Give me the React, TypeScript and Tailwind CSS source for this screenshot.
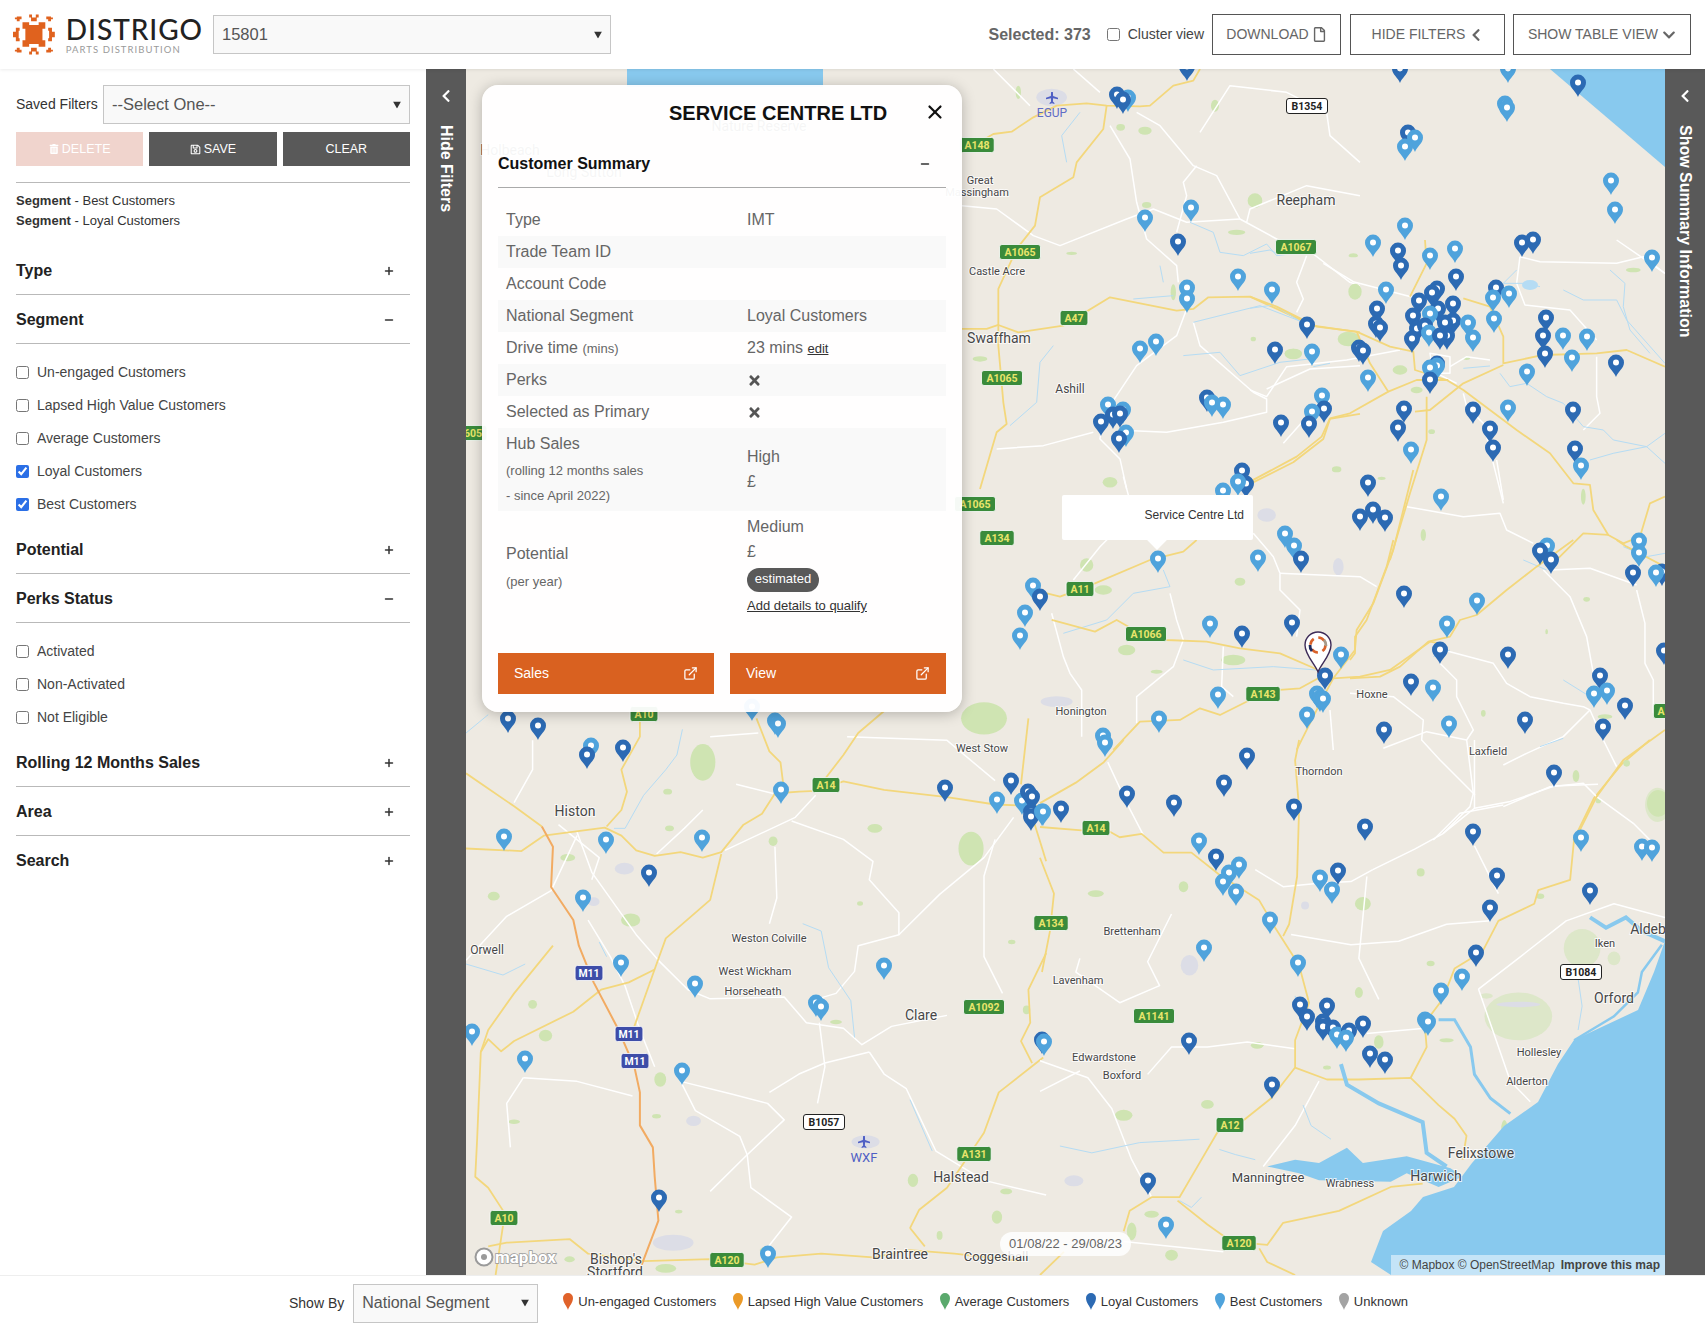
import type { ReactNode } from "react";
import { ExternalLink, Minus, Plus, X } from "lucide-react";
import { FaChevronDown, FaChevronLeft, FaRegFile, FaRegSave, FaTimes, FaTrashAlt } from "react-icons/fa";

const LIGHT = "#4fa3dc";
const DARK = "#2c6ab3";

type Region = {
  transform: string;
  green: number[][];
  forest?: number[][];
  grey?: number[][];
  white: string[];
  water: string[];
  yellow: string[];
  orange?: string[];
};

// each region of the map is traced in its own local coordinates
const regions: Region[] = [
  {
    transform: "translate(466 700) scale(.37 .3667)",
    green: [[1365, 405, 34, 46], [640, 170, 34, 50], [1400, 50, 62, 44], [445, 600, 26, 18], [525, 1035, 16, 20], [215, 915, 18, 16], [1105, 350, 20, 12], [830, 385, 12, 13], [1435, 1410, 14, 18], [1208, 1310, 14, 18], [75, 535, 16, 12], [1000, 878, 16, 6], [550, 350, 12, 8], [545, 250, 12, 8], [130, 1150, 16, 6], [515, 1135, 12, 6], [1515, 845, 10, 12], [1475, 660, 10, 6], [1065, 555, 8, 6], [275, 430, 20, 10], [180, 830, 12, 12], [810, 1500, 16, 8], [1280, 1460, 8, 12], [1460, 1340, 16, 8], [575, 1395, 10, 5], [280, 1525, 14, 8], [540, 1550, 28, 12]],
    grey: [[560, 1480, 55, 22], [1080, 1205, 38, 18], [615, 1148, 20, 14], [428, 460, 26, 16], [345, 550, 16, 12]],
    white: [
      "M300 360L340 470L460 640L520 710L600 790L660 815L860 810L920 880L1020 895L1070 940L1150 890L1300 860",
      "M0 710L110 590L230 520L300 370",
      "M700 410L890 320L945 260",
      "M730 230L830 255",
      "M880 330L1020 380L1100 440L1090 490L1170 580L1170 640L1060 670L1050 740L1000 800L950 815",
      "M1170 640L1280 530L1400 430L1480 320",
      "M835 400L840 540L820 610",
      "M955 880L970 1000L950 1100",
      "M1090 960L1130 1020L1190 1060L1270 1230L1400 1310L1568 1350",
      "M580 1040L720 1075L815 1100L860 1145L760 1240L660 1340",
      "M580 1040L620 1120L740 1190L760 1240L770 1330L880 1410L810 1500",
      "M155 1030L110 1100L120 1220",
      "M155 1030L300 1040L450 1080",
      "M820 1070L900 1020L970 990L1090 960",
      "M1430 380L1400 480L1400 700L1450 800",
      "M1030 100L1300 110L1430 220",
      "M330 600L390 700L430 780L470 900L510 1000",
      "M250 340L360 430L340 490",
      "M180 110L180 190L130 280",
      "M660 100L790 90",
      "M515 420L590 350L640 300",
    ],
    water: ["M585 80L570 150L540 190L480 260L430 350L400 350", "M0 90L60 40", "M910 610L960 630L980 730L1040 820L1050 920", "M1200 1090L1260 1230", "M0 720L100 750L160 720", "M360 660L380 700"],
    yellow: [
      "M0 200L130 290L205 345",
      "M0 405L150 412L210 370L375 348L420 370L460 410L510 425L580 415L640 430L690 415L750 340L800 310L835 255",
      "M835 255L900 250L945 248L1020 222L1130 245L1300 265L1430 285L1568 290",
      "M470 40L470 100L420 190L435 250L420 300L380 345",
      "M785 50L820 140L850 170L860 250",
      "M945 248L1020 150L1060 90L1130 30",
      "M515 720L540 650L660 545L690 420",
      "M515 720L455 890",
      "M510 735L440 770L365 790L290 850L130 930L95 958L60 925L40 960L30 1200L25 1300L60 1330L105 1400L80 1568",
      "M235 670L130 800L60 900L40 960",
      "M60 1490L110 1480L280 1470L330 1510L480 1530L660 1525L780 1540L840 1520L960 1510L1100 1520L1200 1500L1320 1510L1500 1530",
      "M1200 1440L1225 1390L1300 1330L1400 1180L1440 1070L1560 975",
      "M1200 1440L1240 1490",
      "M1500 230L1520 50",
      "M1525 300L1568 440",
      "M1568 690L1520 790L1525 880L1500 930L1530 990",
    ],
    orange: ["M205 345L235 400L230 510L290 600L305 670L345 770L410 895L455 1000L470 1070L470 1160L505 1220L510 1300L520 1420L475 1540"],
  },
  {
    transform: "translate(1040 740) scale(.3986 .3412)",
    green: [[810, 480, 20, 20], [955, 388, 10, 12], [140, 450, 20, 10], [360, 430, 12, 16], [210, 1100, 22, 16], [420, 1068, 16, 13], [545, 895, 16, 10], [800, 740, 10, 16], [1255, 458, 10, 8], [980, 655, 10, 8], [1020, 880, 18, 6], [850, 885, 12, 20], [720, 960, 10, 6], [280, 1390, 18, 10], [230, 1440, 12, 26], [330, 1510, 16, 16], [1165, 1140, 8, 26]],
    forest: [[1200, 810, 85, 70], [1360, 610, 46, 56], [1550, 190, 32, 50], [1440, 640, 16, 20], [1120, 750, 16, 8]],
    grey: [[375, 660, 22, 30], [85, 1292, 24, 16], [665, 485, 10, 12], [1200, 775, 55, 8]],
    white: [
      "M835 380L940 320L1010 275L1090 200L1180 180L1290 135L1400 130",
      "M540 380L610 430L700 420L780 415L835 380",
      "M1100 730L1200 640L1320 530L1440 480L1568 520",
      "M820 860L965 845",
      "M380 900L420 900L520 885L640 905",
      "M0 940L120 990L180 1080L230 1230L280 1340",
      "M210 1470L460 1500",
      "M170 65L220 190L260 280",
      "M330 510L270 650L300 720L200 770L90 680L100 640",
      "M1090 0L1090 200",
      "M1090 310L1150 450",
      "M820 400L800 640L850 760",
      "M270 980L330 900L380 900",
      "M700 1000L640 1130L560 1250",
      "M630 570L780 600L900 590L1020 540L1130 530",
      "M1100 730L1180 1000L1230 1060",
      "M0 1030L100 970",
    ],
    water: ["M540 1230L490 1215L450 1200", "M50 1190L130 1210L250 1180L400 1170", "M660 1070L680 1130L730 1170", "M350 1350L380 1370L405 1340", "M640 750L650 800", "M1350 700L1360 780L1350 850", "M1385 1290L1490 1380", "M1040 1340L1230 1320L1385 1290"],
    yellow: [
      "M0 255L105 265L170 265L200 285L255 275L310 330L380 330L450 395L550 470L590 550L650 660L675 770L640 880L640 960L720 995L800 995L930 990L1000 1070L1040 1110L1070 1160L1060 1230",
      "M650 0L640 60L650 200L645 400L625 540L610 575",
      "M640 960L580 1050L510 1115L450 1140L400 1240L350 1340L280 1340L225 1380L210 1440",
      "M345 1350L420 1420L480 1470L570 1480L610 1415L750 1380L880 1310L960 1300",
      "M550 1490L570 1530L640 1568",
      "M0 345L35 450L25 560L5 680",
      "M930 990L970 900L965 830L1010 760L1040 670L1110 620L1150 530L1240 480L1250 440L1330 410L1340 290L1390 170L1460 70L1530 0",
      "M0 185L90 125L160 65L210 0",
      "M0 1568L60 1500",
    ],
  },
  {
    transform: "translate(960 69) scale(.3333)",
    green: [[482, 175, 13, 10], [555, 185, 20, 12], [830, 490, 26, 8], [1165, 810, 32, 22], [1000, 855, 26, 16], [885, 395, 22, 22], [335, 553, 16, 5], [60, 870, 22, 8], [765, 110, 12, 18], [560, 408, 14, 9], [640, 670, 8, 24], [175, 70, 8, 20], [880, 810, 8, 7], [1130, 1200, 14, 8], [450, 1240, 22, 16], [1180, 560, 14, 5]],
    grey: [[275, 85, 46, 26]],
    white: [
      "M530 130L600 170L700 290L770 320L840 450L950 510L1060 555L1170 640L1200 650",
      "M680 720L650 800L530 890L430 1040L420 1110L480 1170L500 1260",
      "M720 190L810 50L980 70L1100 130L1110 200L1200 280",
      "M450 170L510 270L530 400L560 510L650 590L655 640",
      "M6 410L110 420L220 500L300 530L500 450L580 420L680 460L840 450",
      "M700 760L720 830L880 970L920 990L920 1030L790 1060L620 1090L520 1085",
      "M920 960L1050 900L1200 890",
      "M650 490L680 380L670 340L710 290",
      "M110 1140L250 1130L400 1090",
      "M1040 560L1010 640L1030 690L1010 730",
      "M860 460L870 420L1040 350L1200 380",
      "M340 0L420 70",
      "M100 0L210 110",
    ],
    water: ["M690 460L760 490L780 550L850 560L920 525L950 560L1070 545", "M360 130L305 200L320 280", "M280 830L240 880L230 1000L150 1070", "M520 690L640 680", "M700 760L900 710L1030 760", "M670 860L780 850L840 920L960 880L1050 870", "M600 590L610 640"],
    yellow: [
      "M6 250L100 195L155 188L220 145L290 110L380 103L440 110L540 112L570 110L640 50L700 35L720 0",
      "M440 110L430 180L350 280L340 325L240 385L225 470L170 540L115 660L115 830L130 1000L140 1065L110 1090L60 1260",
      "M6 780L80 780L115 768L175 790L310 770L450 685L650 725L700 720L745 685L870 683L1060 770L1200 790",
      "M1200 1035L1110 1050L1090 1110L1000 1180L860 1250",
    ],
  },
  {
    transform: "translate(1250 240) scale(.3333)",
    green: [[310, 300, 22, 20], [130, 340, 26, 14], [315, 155, 20, 24], [450, 390, 22, 14], [500, 450, 18, 10], [650, 355, 10, 5], [260, 690, 14, 7], [545, 575, 10, 7], [395, 715, 12, 5], [1150, 90, 22, 7], [310, 45, 12, 5], [1000, 770, 7, 24], [520, 885, 8, 18]],
    white: [
      "M220 70L310 125L500 175",
      "M810 50L870 65L1100 70L1180 50L1245 100",
      "M1245 100L1100 0",
      "M810 50L800 130L825 195L960 210L1040 300",
      "M1040 350L1040 470L1050 520L1000 570",
      "M640 460L650 500L700 550L760 790",
      "M470 800L640 830L750 820L770 870L850 910",
      "M540 340L600 350L600 400L550 400Z",
      "M600 380L650 350L720 360",
      "M0 450L50 470L110 380L290 360L450 330",
      "M100 610L180 520L240 480",
      "M560 400L620 430",
      "M740 660L760 780",
    ],
    water: ["M940 150L1000 180L1100 180L1130 240L1245 370", "M750 400L780 440L830 430L890 470L940 490L1000 560L1060 570L1090 600L1190 620L1245 580", "M800 90L760 130L830 130L870 140", "M1080 90L1125 130L1120 200L1140 270L1200 340", "M1020 660L1090 640L1190 620L1245 670", "M640 385L720 378", "M0 40L60 30L90 45", "M0 205L70 195L160 250", "M190 380L240 370"],
    yellow: [
      "M0 170L80 200L200 260L320 275L420 320L490 335L495 390L590 420L640 450L720 510L800 570L900 640L970 730L1020 735L1030 810L1075 885L1120 910L1170 890L1200 790L1245 770",
      "M320 275L360 370L415 455L300 520L240 535L215 590L140 650L0 725",
      "M415 455L500 420L595 420",
      "M525 0L530 70L480 170",
      "M640 175L720 200L760 290L760 370L880 345L1040 340L1130 330L1245 380",
      "M495 515L540 510L640 430L760 375",
      "M530 470L530 600L480 760L420 960",
      "M920 960L1000 880L1075 885",
    ],
  },
  {
    transform: "translate(1350 540) scale(.3333)",
    green: [[710, 178, 10, 7], [590, 275, 4, 8], [400, 520, 7, 10], [678, 708, 10, 18], [745, 782, 8, 8], [925, 790, 34, 40], [765, 530, 22, 7], [830, 670, 10, 10]],
    white: [
      "M580 90L660 170L710 290L730 400",
      "M270 370L320 420L320 470L370 570L350 600L370 760L360 800L280 880",
      "M280 330L430 370L470 430L540 470L640 490L700 500L720 510L760 600L800 680",
      "M100 625L230 575L350 600",
      "M460 800L600 740L700 730L740 770L850 850L900 900",
      "M250 900L330 820L460 795",
      "M860 150L885 250L885 370L910 420L910 520",
      "M0 460L130 470L220 540L215 600L270 660L375 765",
      "M720 510L640 590L530 640L460 675",
      "M600 90L720 85L860 135",
    ],
    water: ["M520 60L590 90", "M570 620L640 595", "M640 420L720 470", "M820 20L890 50L945 40", "M300 330L250 350"],
    yellow: [
      "M130 0L110 80L50 240L15 290L15 340L0 360",
      "M0 415L90 410L150 380L235 305L300 290L330 240L380 225L470 150L560 80L670 0",
      "M945 570L820 660L740 770L690 870L670 900",
      "M800 0L830 20L945 80",
    ],
  },
  {
    transform: "translate(1040 470) scale(.3333)",
    green: [[260, 540, 26, 16], [140, 285, 20, 20], [190, 360, 26, 14], [600, 335, 16, 12], [580, 570, 36, 16], [350, 605, 18, 6]],
    grey: [[680, 135, 28, 20], [895, 290, 16, 26], [50, 695, 48, 16]],
    white: [
      "M250 20L280 130L180 230L100 330",
      "M35 430L70 560L90 610L125 660L125 800",
      "M720 310L720 360L780 420L770 500",
      "M720 310L960 320L1010 350",
      "M640 190L700 260L720 310",
      "M550 530L545 650L580 680",
      "M390 370L410 450L430 510L400 590L290 680L290 760",
      "M870 720L880 840",
    ],
    water: ["M70 490L200 450L280 370L390 350", "M430 570L520 600L700 590L830 600", "M370 300L390 350"],
    yellow: [
      "M0 365L60 380L165 340L330 270L430 245L470 210",
      "M35 450L165 485L230 450L300 490L380 510L500 515L600 535L720 550L835 600",
      "M220 840L300 755L420 750L480 715L540 735L630 690L720 660L780 655L835 625L880 625L960 620L1050 600L1170 515L1200 520",
      "M770 840L840 700L880 625L945 540L950 480L1000 400L1060 240L1120 0",
    ],
  },
];

// tip of every customer pin, in page coordinates: [x, y, 0 light / 1 dark]
const pins: number[][] = [
  [1187, 81, 1], [1128, 112, 0], [1117, 109, 1], [1123, 114, 1], [1400, 83, 1], [1508, 83, 0], [1578, 97, 1], [1505, 118, 0], [1507, 122, 0],
  [1408, 147, 1], [1415, 152, 0], [1405, 161, 0], [1611, 195, 0], [1615, 224, 0], [1405, 240, 0], [1191, 222, 0], [1145, 232, 0], [1178, 256, 1],
  [1238, 291, 0], [1272, 304, 0], [1187, 302, 0], [1187, 313, 0], [1307, 339, 1], [1156, 356, 0], [1140, 363, 0], [1275, 364, 1], [1312, 366, 0], [1359, 362, 1],
  [1373, 257, 0], [1398, 265, 1], [1401, 280, 1], [1430, 270, 0], [1455, 263, 0], [1456, 291, 1], [1522, 257, 1], [1533, 254, 1], [1652, 272, 0], [1386, 304, 0],
  [1377, 323, 1], [1376, 338, 1], [1380, 342, 1], [1363, 365, 1],
  [1437, 303, 1], [1432, 307, 1], [1419, 315, 1], [1413, 330, 1], [1438, 323, 1], [1453, 318, 1], [1417, 343, 1], [1412, 353, 1], [1453, 335, 1],
  [1430, 328, 0], [1425, 340, 1], [1429, 347, 0], [1447, 350, 1], [1440, 350, 1], [1445, 337, 1], [1468, 337, 0], [1473, 352, 0],
  [1496, 302, 1], [1493, 312, 0], [1509, 308, 0], [1494, 333, 0], [1546, 332, 1], [1563, 350, 0], [1587, 351, 0], [1543, 350, 1], [1545, 368, 1], [1572, 372, 0], [1616, 377, 1], [1527, 386, 0],
  [1437, 378, 1], [1437, 380, 0], [1430, 382, 0], [1430, 394, 1],
  [1368, 392, 0], [1404, 423, 1], [1398, 442, 1], [1411, 464, 0], [1473, 424, 1], [1508, 422, 0], [1573, 424, 1], [1490, 443, 1], [1493, 462, 1], [1575, 463, 1], [1581, 480, 0],
  [1368, 497, 1], [1441, 511, 0], [1360, 531, 1], [1373, 524, 1], [1385, 532, 1], [1285, 548, 0], [1294, 560, 0], [1301, 573, 1],
  [1108, 419, 0], [1123, 424, 0], [1113, 429, 1], [1120, 428, 1], [1101, 436, 1], [1126, 447, 0], [1119, 453, 1], [1207, 412, 1], [1212, 417, 0], [1223, 419, 0], [1281, 437, 1],
  [1322, 410, 0], [1324, 423, 1], [1312, 426, 0], [1309, 438, 1],
  [1242, 485, 1], [1246, 498, 1], [1238, 496, 0], [1223, 505, 0],
  [1158, 573, 0], [1258, 572, 0], [1547, 560, 0], [1540, 565, 1], [1551, 574, 1], [1639, 555, 0], [1639, 567, 0], [1633, 587, 1], [1662, 586, 1], [1656, 587, 0],
  [1404, 608, 1], [1477, 615, 0], [1447, 638, 0], [1440, 664, 1], [1508, 669, 1], [1411, 696, 1], [1433, 702, 0], [1600, 690, 1], [1607, 705, 0], [1594, 708, 0], [1625, 720, 1],
  [1449, 738, 0], [1525, 734, 1], [1384, 744, 1], [1603, 741, 1], [1554, 787, 1], [1664, 665, 1],
  [1033, 600, 0], [1040, 611, 1], [1025, 627, 0], [1020, 650, 0],
  [1210, 638, 0], [1242, 648, 1], [1292, 637, 1], [1341, 669, 0], [1218, 709, 0], [1325, 690, 1], [1317, 708, 0], [1320, 712, 0], [1323, 713, 0], [1307, 729, 0], [1159, 733, 0], [1103, 750, 0], [1105, 757, 0],
  [508, 733, 1], [538, 740, 1], [591, 760, 0], [587, 769, 1], [623, 762, 1], [752, 721, 0], [775, 735, 0], [778, 738, 0], [781, 804, 0], [945, 802, 1], [997, 814, 0], [1011, 795, 1],
  [1022, 815, 0], [1028, 806, 1], [1032, 811, 1], [1031, 826, 1], [1031, 831, 1], [1042, 826, 0], [504, 851, 0], [606, 854, 0], [702, 852, 0], [649, 887, 1], [583, 912, 0], [621, 977, 0],
  [695, 998, 0], [884, 980, 0], [816, 1017, 0], [821, 1021, 0], [472, 1046, 0], [525, 1073, 0], [682, 1085, 0], [659, 1212, 1], [768, 1268, 0],
  [1247, 770, 1], [1127, 808, 1], [1174, 817, 1], [1224, 797, 1], [1294, 821, 1], [1043, 826, 0], [1061, 823, 1], [1365, 841, 1], [1473, 846, 1], [1581, 852, 0], [1642, 861, 0], [1652, 862, 0],
  [1199, 855, 0], [1216, 871, 1], [1239, 879, 0], [1229, 887, 0], [1223, 896, 0], [1236, 906, 0], [1338, 885, 1], [1320, 892, 0], [1332, 904, 0], [1497, 890, 1], [1590, 905, 1], [1490, 922, 1],
  [1270, 934, 0], [1204, 962, 0], [1476, 967, 1], [1298, 977, 0], [1462, 991, 0], [1441, 1005, 0], [1425, 1034, 0], [1428, 1036, 0],
  [1300, 1019, 1], [1307, 1031, 1], [1327, 1020, 1], [1323, 1036, 1], [1323, 1041, 1], [1333, 1042, 1], [1337, 1049, 0], [1349, 1045, 1], [1346, 1052, 0], [1363, 1038, 1], [1370, 1068, 1], [1385, 1074, 1],
  [1189, 1055, 1], [1042, 1054, 1], [1044, 1056, 0], [1272, 1099, 1], [1148, 1195, 1], [1166, 1239, 0],
];

const placeLabels: [string, number, number, number][] = [
  ["Holbeach", 510, 155, 14], ["Long Sutton", 584, 177, 14], ["Nature Reserve", 759, 131, 14],
  ["Histon", 575, 816, 14], ["Orwell", 487, 954, 12], ["Weston Colville", 769, 942, 11], ["West Wickham", 755, 975, 11], ["Horseheath", 753, 995, 11],
  ["West Stow", 982, 752, 11], ["Clare", 921, 1020, 14], ["Halstead", 961, 1182, 14], ["Braintree", 900, 1259, 14], ["Coggeshall", 996, 1261, 13],
  ["Bishop's", 616, 1264, 14], ["Stortford", 615, 1277, 14], ["Brettenham", 1132, 935, 11], ["Lavenham", 1078, 984, 11], ["Edwardstone", 1104, 1061, 11], ["Boxford", 1122, 1079, 11],
  ["Thorndon", 1319, 775, 11], ["Laxfield", 1488, 755, 11], ["Iken", 1605, 947, 11], ["Aldeb", 1648, 934, 14], ["Orford", 1614, 1003, 14], ["Hollesley", 1539, 1056, 11], ["Alderton", 1527, 1085, 11],
  ["Felixstowe", 1481, 1158, 14], ["Harwich", 1436, 1181, 14], ["Manningtree", 1268, 1182, 13], ["Wrabness", 1350, 1187, 11], ["Great", 980, 184, 11], ["Massingham", 977, 196, 11],
  ["Reepham", 1306, 205, 14], ["Castle Acre", 997, 275, 11], ["Swaffham", 999, 343, 14], ["Ashill", 1070, 393, 12], ["Hoxne", 1372, 698, 11], ["Honington", 1081, 715, 11],
];

const shields: [string, number, number, string][] = [
  ["A10", 644, 714, "g"], ["A14", 826, 785, "g"], ["A10", 504, 1218, "g"], ["A120", 727, 1260, "g"], ["A1092", 984, 1007, "g"], ["A131", 974, 1154, "g"], ["A134", 1051, 923, "g"],
  ["A14", 1096, 828, "g"], ["A1141", 1154, 1016, "g"], ["A12", 1230, 1125, "g"], ["A120", 1239, 1243, "g"], ["A148", 977, 145, "g"], ["A1065", 1020, 252, "g"], ["A1065", 1002, 378, "g"],
  ["A47", 1074, 318, "g"], ["A1067", 1296, 247, "g"], ["A11", 1080, 589, "g"], ["A1066", 1146, 634, "g"], ["A143", 1263, 694, "g"], ["A1065", 975, 504, "g"], ["A134", 997, 538, "g"],
  ["A1", 1664, 711, "g"], ["605", 473, 433, "g"],
  ["M11", 589, 973, "m"], ["M11", 629, 1034, "m"], ["M11", 635, 1061, "m"],
  ["B1354", 1307, 106, "b"], ["B1057", 824, 1122, "b"], ["B1084", 1581, 972, "b"],
];

function Pin({ x, y, color }: { x: number; y: number; color: string }) {
  return (
    <g transform={`translate(${x} ${y})`}>
      <path d="M0 0C-2-5.5-8-8.5-8-14.4A8 8 0 1 1 8-14.4C8-8.5 2-5.5 0 0Z" fill={color} />
      <circle cy={-14.6} r={3} fill="#fff" />
    </g>
  );
}

function Shield({ label, x, y, kind }: { label: string; x: number; y: number; kind: string }) {
  const w = label.length * 6.6 + 8;
  const fill = kind === "g" ? "#3a8b3b" : kind === "m" ? "#3e4da8" : "#fff";
  const text = kind === "g" ? "#e9e56c" : kind === "m" ? "#fff" : "#222";
  return (
    <g>
      <rect x={x - w / 2} y={y - 7.5} width={w} height={15} rx={2.5} fill={fill} stroke={kind === "b" ? "#222" : "#fff"} strokeWidth={kind === "b" ? 1 : 0.8} />
      <text x={x} y={y + 3.6} textAnchor="middle" fontSize={10.5} fontWeight={700} fill={text}>
        {label}
      </text>
    </g>
  );
}

function Plane({ x, y }: { x: number; y: number }) {
  return <path transform={`translate(${x} ${y})`} d="M-.9-6L.9-6L1.1-2L6-.2L6 1.2L1.1 .3L.9 3.6L2.4 5L2.4 6L0 5.3L-2.4 6L-2.4 5L-.9 3.6L-1.1 .3L-6 1.2L-6-.2L-1.1-2Z" fill="#4f5fc4" />;
}

function MapCanvas() {
  return (
    <svg viewBox="466 69 1199 1206" className="block h-full w-full font-['Roboto',sans-serif]">
      {regions.map((r) => (
        <g key={r.transform} transform={r.transform}>
          {r.forest?.map((e) => <ellipse key={e.join()} cx={e[0]} cy={e[1]} rx={e[2]} ry={e[3]} fill="#dde7c9" />)}
          {r.green.map((e) => <ellipse key={e.join()} cx={e[0]} cy={e[1]} rx={e[2]} ry={e[3]} fill="#cfe4b2" />)}
          {r.grey?.map((e) => <ellipse key={e.join()} cx={e[0]} cy={e[1]} rx={e[2]} ry={e[3]} fill="#dcdde6" />)}
          {r.white.map((d) => <path key={d} d={d} fill="none" stroke="#fff" strokeWidth={1.5} strokeLinejoin="round" vectorEffect="non-scaling-stroke" />)}
          {r.water.map((d) => <path key={d} d={d} fill="none" stroke="#b5dcf4" strokeWidth={1} strokeLinejoin="round" vectorEffect="non-scaling-stroke" />)}
          {r.yellow.map((d) => <path key={d} d={d} fill="none" stroke="#f3d77c" strokeWidth={1.8} strokeLinejoin="round" vectorEffect="non-scaling-stroke" />)}
          {r.orange?.map((d) => <path key={d} d={d} fill="none" stroke="#f2ab62" strokeWidth={2} strokeLinejoin="round" vectorEffect="non-scaling-stroke" />)}
        </g>
      ))}

      {/* sea and estuaries */}
      <path d="M1550 69L1665 167L1665 69Z" fill="#88c9ee" />
      <rect x={627} y={69} width={196} height={18} fill="#88c9ee" />
      <path d="M1391 1275L1371 1262L1383 1231L1411 1211L1423 1197L1454 1187L1472 1163L1504 1126L1538 1102L1558 1064L1574 1040L1638 1010L1654 972L1665 941L1665 1275Z" fill="#88c9ee" />
      <g transform="translate(1040 740) scale(.3986 .3412)">
        <path d="M570 1250L640 1230L700 1240L770 1195L810 1240L920 1220L1030 1255L1060 1280L1000 1310L920 1270L880 1295L700 1290L650 1270Z" fill="#88c9ee" />
        <path d="M755 950L770 1010L850 1065L960 1120L970 1210L1020 1250" fill="none" stroke="#88c9ee" strokeWidth={4} vectorEffect="non-scaling-stroke" />
        <path d="M1000 820L1040 820L1080 900L1090 980L1130 1050L1180 1095" fill="none" stroke="#88c9ee" strokeWidth={3} vectorEffect="non-scaling-stroke" />
        <path d="M1380 520L1420 550L1470 520L1510 560L1568 590" fill="none" stroke="#88c9ee" strokeWidth={4} vectorEffect="non-scaling-stroke" />
        <path d="M1560 600L1510 680L1500 740L1440 810L1340 880" fill="none" stroke="#88c9ee" strokeWidth={2.5} vectorEffect="non-scaling-stroke" />
      </g>
      <ellipse cx={1530} cy={285} rx={8} ry={5} fill="#b5dcf4" />

      {placeLabels.map(([t, x, y, s]) => (
        <text key={t} x={x} y={y} textAnchor="middle" fontSize={s} fill="#474747" stroke="#fff" strokeWidth={2} strokeOpacity={0.75} className="[paint-order:stroke]">
          {t}
        </text>
      ))}
      <Plane x={1052} y={98} />
      <text x={1052} y={117} textAnchor="middle" fontSize={12} fill="#5f6cc6">EGUP</text>
      <Plane x={864} y={1142} />
      <text x={864} y={1162} textAnchor="middle" fontSize={13} fill="#4f5fc4">WXF</text>

      {shields.map(([t, x, y, k]) => <Shield key={`${t}${x}`} label={t} x={x} y={y} kind={k} />)}

      {pins.map(([x, y, t], i) => <Pin key={i} x={x} y={y} color={t ? DARK : LIGHT} />)}

      {/* selected customer marker */}
      <g>
        <path d="M1318 672C1315 664 1305 655 1305 645A13 13 0 1 1 1331 645C1331 655 1321 664 1318 672Z" fill="#fff" stroke="#3d2b57" strokeWidth={1.4} />
        <circle cx={1318} cy={645} r={7.5} fill="none" stroke="#d9622a" strokeWidth={2.6} strokeDasharray="7 4.8" />
        <path d="M1310 645A8 8 0 0 0 1312 651" fill="none" stroke="#1f2a5c" strokeWidth={2.8} />
        <path d="M1324 640A8 8 0 0 1 1326 646" fill="none" stroke="#a89a88" strokeWidth={2.8} />
      </g>

      {/* mapbox logo */}
      <circle cx={484} cy={1257} r={8.5} fill="#fff" stroke="#9a9a9a" strokeWidth={2} />
      <circle cx={484} cy={1257} r={3} fill="#9a9a9a" />
      <text x={495} y={1263} fontSize={17} fontWeight={700} fill="#fff" stroke="#9a9a9a" strokeWidth={1.6} className="[paint-order:stroke]">
        mapbox
      </text>
    </svg>
  );
}

function Logo() {
  return (
    <div className="flex w-[190px] shrink-0 items-center gap-[11px]">
      <svg width="43" height="43" viewBox="0 0 44 44" fill="#e0621e">
        <path d="M10 9h7v3h10v-3h7v7h-3v12h3v7h-7v-3H17v3h-7v-7h3V16h-3z" />
        <path d="M3 15h4v3H6v8h1v3H3v-4H0v-6h3zM41 15h-4v3h1v8h-1v3h4v-4h3v-6h-3z" />
        <path d="M4 3h5v3H7v2H4V6H2V4h2zM40 3h-5v3h2v2h3V6h2V4h-2zM4 41h5v-3H7v-2H4v2H2v2h2zM40 41h-5v-3h2v-2h3v2h2v2h-2z" />
        <path d="M17 1h3v3h4V1h3v3h-2v4h-6V4h-2zM17 43h3v-3h4v3h3v-3h-2v-4h-6v4h-2z" />
      </svg>
      <div className="flex flex-col font-['Lato',sans-serif]">
        <span className="mt-px text-[28px] leading-[28px] font-medium tracking-[.95px] text-[#222]">DISTRIGO</span>
        <span className="mt-px text-[9.5px] leading-[11px] tracking-[1.05px] text-[#9a9a9a]">PARTS DISTRIBUTION</span>
      </div>
    </div>
  );
}

function Select({ value, className, text = "text-[16.5px]" }: { value: string; className: string; text?: string }) {
  return (
    <div className={`relative ${className}`}>
      <select defaultValue={value} className={`h-full w-full appearance-none rounded-none border-[1.5px] border-[#c6c6c6] bg-[#f9f9f9] pl-[8px] text-[#555] ${text}`}>
        <option>{value}</option>
      </select>
      <svg viewBox="0 0 8 7" className="pointer-events-none absolute top-1/2 right-[9px] h-[7px] w-[8px] -translate-y-1/2">
        <path d="M0 0H8L4 7Z" fill="#333" />
      </svg>
    </div>
  );
}

function Section({ title, open, last, children }: { title: string; open?: boolean; last?: boolean; children?: ReactNode }) {
  return (
    <div>
      <div className={`flex h-[49px] items-center justify-between pr-[15px] pt-px ${last ? "" : "border-b border-[#b9b9b9]"}`}>
        <span className="text-[16px] font-bold text-[#222]">{title}</span>
        {open ? <Minus size={12} strokeWidth={3} color="#333" /> : <Plus size={12} strokeWidth={3} color="#333" />}
      </div>
      {children && <div className="pt-[12px] pb-[4px]">{children}</div>}
    </div>
  );
}

function Check({ label, checked }: { label: string; checked?: boolean }) {
  return (
    <label className="flex h-[33px] items-center gap-2 text-[14px] text-[#444]">
      <input type="checkbox" defaultChecked={checked} className="m-0 h-[13px] w-[13px] accent-[#2b6fe6]" />
      {label}
    </label>
  );
}

function Row({ label, value, shade }: { label: ReactNode; value?: ReactNode; shade?: boolean }) {
  return (
    <div className={`grid h-8 grid-cols-[241px_1fr] items-center leading-[32px] ${shade ? "bg-[#f9f9f9]" : ""}`}>
      <div className="pl-2">{label}</div>
      <div className="pl-2">{value}</div>
    </div>
  );
}

function SideBar({ label }: { label: string }) {
  return (
    <div className="flex w-10 shrink-0 flex-col items-center bg-[#595959] pt-[20px] text-white">
      <FaChevronLeft size={14} />
      <span className="mt-[22px] text-[16px] font-bold [writing-mode:vertical-rl]">{label}</span>
    </div>
  );
}

function LegendPin({ color, label }: { color: string; label: string }) {
  return (
    <span className="flex items-center gap-[5px]">
      <svg width="10" height="17" viewBox="0 0 10 17">
        <path d="M5 17C4 13 0 10 0 5A5 5 0 0 1 10 5C10 10 6 13 5 17Z" fill={color} />
      </svg>
      {label}
    </span>
  );
}

export default function App() {
  return (
    <div className="flex h-[1330px] w-[1705px] flex-col overflow-hidden bg-white font-['Liberation_Sans',sans-serif] text-[#444]">
      <header className="z-10 flex h-[69px] shrink-0 items-center pl-[13px] pr-[14px] shadow-[0_1px_3px_rgba(0,0,0,.08)]">
        <Logo />
        <Select value="15801" className="ml-[10px] h-[39px] w-[398px]" />
        <div className="ml-auto flex items-center">
          <span className="text-[16px] font-bold text-[#666]">Selected: 373</span>
          <label className="ml-[16px] flex items-center gap-[8px] text-[14px] text-[#444]">
            <input type="checkbox" className="m-0 h-[13px] w-[13px]" />
            Cluster view
          </label>
          <button className="ml-[8px] flex h-[41px] w-[129px] items-center justify-center gap-[3px] border-[1.5px] border-[#555] text-[14px] text-[#666]">
            DOWNLOAD <FaRegFile size={15} />
          </button>
          <button className="ml-[9px] flex h-[41px] w-[155px] items-center justify-center gap-[4px] border-[1.5px] border-[#555] text-[14px] text-[#666]">
            HIDE FILTERS <FaChevronLeft size={14} />
          </button>
          <button className="ml-[8px] flex h-[41px] w-[178px] items-center justify-center gap-[4px] border-[1.5px] border-[#555] text-[14px] text-[#666]">
            SHOW TABLE VIEW <FaChevronDown size={14} />
          </button>
        </div>
      </header>

      <main className="flex min-h-0 flex-1">
        <aside className="w-[426px] shrink-0 px-4 pt-4">
          <div className="flex items-center">
            <span className="w-[87px] text-[14px] text-[#333]">Saved Filters</span>
            <Select value="--Select One--" className="h-[39px] flex-1" />
          </div>
          <div className="mt-2 flex gap-[6px] text-[12.5px] text-white">
            <button className="flex h-[34px] flex-1 items-center justify-center gap-[3px] bg-[#f0d4cd]">
              <FaTrashAlt size={10} /> DELETE
            </button>
            <button className="flex h-[34px] flex-1 items-center justify-center gap-[3px] bg-[#595959]">
              <FaRegSave size={11} /> SAVE
            </button>
            <button className="h-[34px] flex-1 bg-[#595959]">CLEAR</button>
          </div>
          <div className="mt-4 border-t border-[#b9b9b9] pt-[8px] text-[13px] leading-[20px] text-[#333]">
            <p><b>Segment</b> - Best Customers</p>
            <p><b>Segment</b> - Loyal Customers</p>
          </div>
          <div className="mt-[15px]">
            <Section title="Type" />
            <Section title="Segment" open>
              <Check label="Un-engaged Customers" />
              <Check label="Lapsed High Value Customers" />
              <Check label="Average Customers" />
              <Check label="Loyal Customers" checked />
              <Check label="Best Customers" checked />
            </Section>
            <Section title="Potential" />
            <Section title="Perks Status" open>
              <Check label="Activated" />
              <Check label="Non-Activated" />
              <Check label="Not Eligible" />
            </Section>
            <Section title="Rolling 12 Months Sales" />
            <Section title="Area" />
            <Section title="Search" last />
          </div>
        </aside>

        <SideBar label="Hide Filters" />

        <div className="relative min-w-0 flex-1 overflow-hidden bg-[#eeeae2]">
          <MapCanvas />

          {/* customer card */}
          <div className="absolute top-4 left-4 w-[480px] rounded-[16px] bg-white/95 px-4 pt-4 pb-[18px] text-[16px] text-[#666] shadow-[0_2px_14px_rgba(0,0,0,.25)]">
            <div className="relative h-6 pl-[171px] text-[20px] leading-6 font-bold text-[#111]">
              SERVICE CENTRE LTD
              <X size={22} strokeWidth={2.4} color="#111" className="absolute top-0 right-0" />
            </div>
            <div className="mt-[14px] flex h-[49px] items-center justify-between border-b border-[#aaa] pt-[2px] pr-[15px] text-[16px] font-bold text-[#111]">
              Customer Summary
              <Minus size={12} strokeWidth={3} color="#333" />
            </div>
            <div className="mt-4">
              <Row label="Type" value="IMT" />
              <Row label="Trade Team ID" shade />
              <Row label="Account Code" />
              <Row label="National Segment" value="Loyal Customers" shade />
              <Row
                label={<>Drive time <span className="text-[13px]">(mins)</span></>}
                value={<>23 mins <span className="text-[13px] text-[#333] underline">edit</span></>}
              />
              <Row label="Perks" value={<FaTimes size={15} color="#555" />} shade />
              <Row label="Selected as Primary" value={<FaTimes size={15} color="#555" />} />
              <div className="grid h-[83px] grid-cols-[241px_1fr] items-center bg-[#f9f9f9] leading-[25px]">
                <div className="pl-2">
                  Hub Sales
                  <p className="mt-[2px] text-[13px]">(rolling 12 months sales</p>
                  <p className="text-[13px]">- since April 2022)</p>
                </div>
                <div className="-mt-[2px] pl-2">
                  High
                  <p>£</p>
                </div>
              </div>
              <div className="grid grid-cols-[241px_1fr] items-center py-[3px] leading-[25px]">
                <div className="pt-[2px] pl-2">
                  Potential
                  <p className="mt-[3px] text-[13px]">(per year)</p>
                </div>
                <div className="pl-2">
                  Medium
                  <p>£</p>
                  <span className="mt-[4px] block h-6 w-[72px] rounded-full bg-[#595959] text-center text-[13px] leading-[22px] text-white">estimated</span>
                  <a className="block pt-px text-[13px] text-[#333] underline">Add details to qualify</a>
                </div>
              </div>
            </div>
            <div className="mt-[32px] flex gap-4 text-[14px] text-white">
              <button className="flex h-[41px] flex-1 items-center justify-between bg-[#d96120] px-4">
                Sales <ExternalLink size={15} />
              </button>
              <button className="flex h-[41px] flex-1 items-center justify-between bg-[#d96120] px-4">
                View <ExternalLink size={15} />
              </button>
            </div>
          </div>

          {/* pin tooltip */}
          <div className="absolute top-[426px] left-[596px] h-[45px] w-[191px] rounded-[2px] bg-white pt-[11px] pr-[9px] text-right text-[12px] text-[#333]">
            Service Centre Ltd
            <div className="absolute -bottom-[7px] left-[88px] h-[14px] w-[14px] rotate-45 bg-white" />
          </div>

          <div className="absolute top-[1163px] left-[534px] flex h-6 w-[131px] items-center justify-center rounded-full bg-white/85 text-[13px] text-[#666]">
            01/08/22 - 29/08/23
          </div>

          <div className="absolute right-0 bottom-0 flex h-5 w-[274px] items-center justify-end gap-[6px] bg-white/50 pr-[5px] text-[12px] text-[#444]">
            © Mapbox © OpenStreetMap <b>Improve this map</b>
          </div>
        </div>

        <SideBar label="Show Summary Information" />
      </main>

      <footer className="flex h-[55px] shrink-0 items-center border-t border-[#eee] pl-[289px] text-[13px] text-[#333]">
        <span className="text-[14px]">Show By</span>
        <Select value="National Segment" className="ml-[9px] h-[39px] w-[185px]" text="text-[16px]" />
        <div className="ml-[25px] flex items-center gap-[16.5px] pb-[3px]">
          <LegendPin color="#e0622a" label="Un-engaged Customers" />
          <LegendPin color="#eb9a28" label="Lapsed High Value Customers" />
          <LegendPin color="#5aa96c" label="Average Customers" />
          <LegendPin color={DARK} label="Loyal Customers" />
          <LegendPin color={LIGHT} label="Best Customers" />
          <LegendPin color="#a3a3a3" label="Unknown" />
        </div>
      </footer>
    </div>
  );
}
